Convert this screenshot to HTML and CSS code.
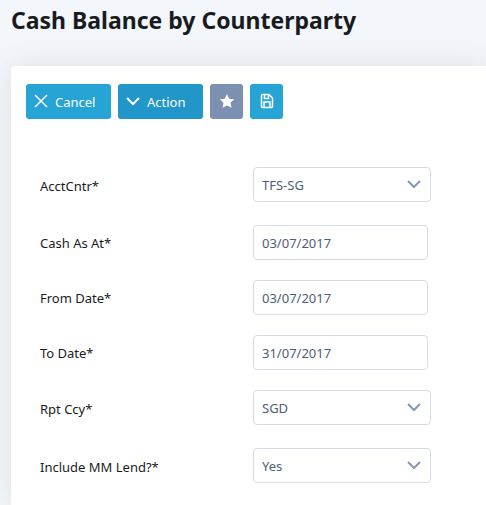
FILE: index.html
```html
<!DOCTYPE html>
<html lang="en">
<head>
  <meta charset="UTF-8" />
  <meta name="viewport" content="width=device-width, initial-scale=1" />
  <title>Cash Balance by Counterparty</title>
  <link rel="stylesheet" href="styles.css">
</head>
<body>
  <h1>Cash Balance by Counterparty</h1>

  <main class="card">
    <!-- Toolbar -->
    <div class="toolbar">
      <button type="button" class="btn">
        <svg width="14" height="16" viewBox="0 0 14 16"><path d="M1 1l12 12M13 1L1 13" /></svg>
        Cancel
      </button>
      <button type="button" class="btn btn-action">
        <svg width="14" height="16" viewBox="0 0 14 16"><path d="M1 4l6 6 6-6" /></svg>
        Action
      </button>
      <button type="button" class="btn btn-icon btn-star" aria-label="Favourite">
        <svg width="16" height="18" viewBox="0 0 16 18"><path class="solid" d="M8 1l2.200 4.700 5 .6-3.700 3.500 1 5L8 12.400l-4.500 2.400 1-5L.8 6.300l5-.6z" /></svg>
      </button>
      <button type="button" class="btn btn-icon" aria-label="Save">
        <svg width="14" height="18" viewBox="0 0 14 18"><path d="M2.500 1.500h6.500l3.500 3.500v8.500a1 1 0 0 1-1 1h-9a1 1 0 0 1-1-1v-11a1 1 0 0 1 1-1zM4.500 1.500v4h4v-4M4 14.500v-5.500h6v5.500" /></svg>
      </button>
    </div>

    <!-- Report parameters -->
    <form class="params">
      <div class="row">
        <label for="acct-cntr">AcctCntr*</label>
        <div class="select">
          <select id="acct-cntr"><option>TFS-SG</option></select>
          <svg width="14" height="10" viewBox="0 0 14 10"><path d="M1 2l6 6 6-6" /></svg>
        </div>
      </div>
      <div class="row">
        <label for="cash-as-at">Cash As At*</label>
        <input type="text" id="cash-as-at" value="03/07/2017" />
      </div>
      <div class="row">
        <label for="from-date">From Date*</label>
        <input type="text" id="from-date" value="03/07/2017" />
      </div>
      <div class="row">
        <label for="to-date">To Date*</label>
        <input type="text" id="to-date" value="31/07/2017" />
      </div>
      <div class="row">
        <label for="rpt-ccy">Rpt Ccy*</label>
        <div class="select">
          <select id="rpt-ccy"><option>SGD</option></select>
          <svg width="14" height="10" viewBox="0 0 14 10"><path d="M1 2l6 6 6-6" /></svg>
        </div>
      </div>
      <div class="row">
        <label for="mm-lend">Include MM Lend?*</label>
        <div class="select">
          <select id="mm-lend"><option>Yes</option></select>
          <svg width="14" height="10" viewBox="0 0 14 10"><path d="M1 2l6 6 6-6" /></svg>
        </div>
      </div>
    </form>
  </main>
</body>
</html>
```
FILE: styles.css
```css
* {
  box-sizing: border-box;
}
body {
  margin: 0;
  padding-left: 11px;
  min-height: 100vh;
  display: flex;
  flex-direction: column;
  background: #f3f6fa;
  font-family: "Noto Sans", "Open Sans", sans-serif;
  font-size: 13px;
  color: #181c21;
}
h1 {
  margin: 4px 0 30px;
  font-size: 23px;
  line-height: 32px;
  font-weight: 700;
}
svg {
  flex: none;
  fill: none;
  stroke: currentColor;
  stroke-width: 1.5;
}
.card {
  flex: 1;
  padding: 18px 15px 0;
  background: #fff;
  border-radius: 4px 0 0 0;
  box-shadow: 0 0 28px rgba(82, 100, 115, 0.14);
}

/* Toolbar */
.toolbar {
  display: flex;
  gap: 7px;
}
.btn {
  display: flex;
  align-items: center;
  gap: 7px;
  min-width: 85px;
  height: 35px;
  padding: 0 15px 0 8px;
  border: none;
  border-radius: 3px;
  background: #26a4d5;
  color: #fff;
  font: inherit;
  cursor: pointer;
}
.btn-action {
  background: #2196c9;
}
.btn-action svg {
  stroke-width: 2;
}
.btn-icon {
  min-width: 33px;
  padding: 0;
  justify-content: center;
}
.btn-star {
  background: #7c90b2;
}
.solid {
  fill: currentColor;
  stroke: none;
}

/* Parameters */
.params {
  margin: 48px 0 0 14px;
  display: flex;
  flex-direction: column;
  gap: 20px;
}
.row {
  display: grid;
  grid-template-columns: 213px 178px;
  align-items: center;
}
.row input,
.row select {
  width: 100%;
  height: 35px;
  padding: 0 8px;
  border: 1px solid #d8dbe6;
  border-radius: 4px;
  background: #fff;
  color: #4e5d78;
  font: inherit;
  appearance: none;
}
.row input {
  width: 175px;
}
.select {
  position: relative;
  height: 38px;
}
.select svg {
  position: absolute;
  top: 12px;
  right: 10px;
  color: #8798b0;
  stroke-width: 2;
  pointer-events: none;
}
```
